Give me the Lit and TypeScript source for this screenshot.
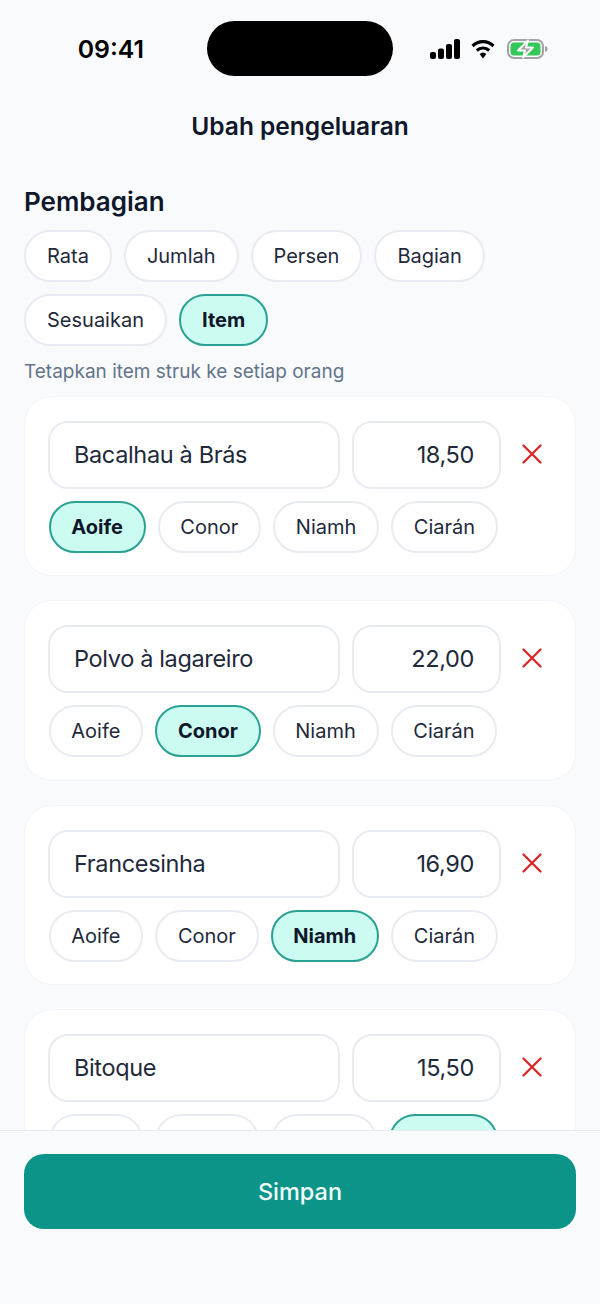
import { LitElement, html, css, svg } from "lit";
import { customElement } from "lit/decorators.js";

const MODES = ["Rata", "Jumlah", "Persen", "Bagian", "Sesuaikan", "Item"];
const PEOPLE = ["Aoife", "Conor", "Niamh", "Ciarán"];
const ITEMS = [
  { name: "Bacalhau à Brás", price: "18,50", who: 0 },
  { name: "Polvo à lagareiro", price: "22,00", who: 1 },
  { name: "Francesinha", price: "16,90", who: 2 },
  { name: "Bitoque", price: "15,50", who: 3 },
];

const closeIcon = svg`<path d="M2.5 2.5 L19.5 19.5 M19.5 2.5 L2.5 19.5" fill="none" stroke="#dc2626" stroke-width="2.3" stroke-linecap="round"/>`;

@customElement("app-root")
export class AppRoot extends LitElement {
  static styles = css`
    :host {
      display: flex;
      flex-direction: column;
      width: 600px;
      height: 1304px;
      overflow: hidden;
      background: #f8fafc;
      font-family: Inter, "Liberation Sans", sans-serif;
      color: #0f172a;
    }
    .status {
      flex: none;
      display: grid;
      grid-template-columns: 207px 186px 207px;
      height: 76px;
      padding-top: 21px;
      box-sizing: border-box;
    }
    .time {
      font-size: 24.8px;
      font-weight: 600;
      color: #000;
      text-align: right;
      padding-right: 63px;
      padding-top: 1px;
      line-height: 55px;
    }
    .island {
      height: 55px;
      border-radius: 28px;
      background: #000;
    }
    .sys {
      display: flex;
      align-items: center;
      gap: 11px;
      height: 55px;
      padding-left: 37px;
    }
    .sys svg { display: block; flex: none; }
    h1 {
      margin: 0;
      flex: none;
      height: 83px;
      padding-top: 33px;
      box-sizing: border-box;
      line-height: 34px;
      font-size: 24.5px;
      font-weight: 600;
      text-align: center;
      color: #0f172a;
    }
    .body {
      flex: 1;
      min-height: 0;
      overflow: hidden;
      padding: 0 24px;
    }
    h2 {
      margin: 27px 0 0;
      font-size: 26px;
      line-height: 32px;
      font-weight: 600;
      color: #0f172a;
    }
    .modes {
      display: flex;
      flex-wrap: wrap;
      gap: 12px;
      margin-top: 12px;
    }
    .chip {
      box-sizing: border-box;
      height: 52px;
      padding: 0 21px;
      display: flex;
      align-items: center;
      border: 2px solid #e8ecf2;
      border-radius: 26px;
      background: #fff;
      font-size: 20px;
      color: #1e293b;
      white-space: nowrap;
    }
    .chip.on {
      border-color: #2ba193;
      background: #ccfbf1;
      font-weight: 700;
      color: #0f172a;
    }
    .hint {
      margin-top: 13px;
      font-size: 19px;
      line-height: 26px;
      color: #64748b;
    }
    .cards {
      display: flex;
      flex-direction: column;
      gap: 24px;
      margin-top: 11px;
    }
    .card {
      box-sizing: border-box;
      height: 180.33px;
      padding: 24px;
      background: #fff;
      border: 1px solid #f1f5f9;
      border-radius: 28px;
      display: flex;
      flex-direction: column;
      gap: 12px;
    }
    .row {
      display: flex;
      align-items: center;
      gap: 12px;
    }
    .field {
      box-sizing: border-box;
      height: 68px;
      padding-bottom: 1px;
      display: flex;
      align-items: center;
      border: 2px solid #e8ecf2;
      border-radius: 20px;
      background: #fff;
      font-size: 23.5px;
      letter-spacing: -0.35px;
      color: #1e293b;
    }
    .name { flex: none; width: 292px; padding-left: 24px; margin-left: -1px; }
    .price { flex: none; width: 149px; justify-content: flex-end; padding-right: 25px; }
    .del { flex: none; width: 22px; height: 22px; margin: 0 0 2px 8px; display: block; }
    .people {
      display: flex;
      gap: 12px;
      margin-left: -0.5px;
    }
    .people .chip { padding: 0 20.75px; }
    .footer {
      flex: none;
      box-sizing: border-box;
      height: 174px;
      padding: 23px 24px 0;
      background: #f8fafc;
      border-top: 1px solid #e8ecf2;
    }
    .save {
      height: 75px;
      border-radius: 20px;
      background: #0d9488;
      color: #f0fdfa;
      font-size: 23.5px;
      font-weight: 500;
      display: flex;
      align-items: center;
      justify-content: center;
    }
  `;

  render() {
    return html`
      <div class="status">
        <div class="time">09:41</div>
        <div class="island"></div>
        <div class="sys">
          <svg width="30" height="20" viewBox="0 0 30 20">
            <rect x="0" y="13" width="6" height="7" rx="2" fill="#000" />
            <rect x="8" y="9.5" width="6" height="10.5" rx="2" fill="#000" />
            <rect x="16" y="5" width="6" height="15" rx="2" fill="#000" />
            <rect x="24" y="0" width="6" height="20" rx="2" fill="#000" />
          </svg>
          <svg width="24" height="20" viewBox="0 0 24 20">
            <path d="M1.5 7 A15 15 0 0 1 22.5 7" fill="none" stroke="#000" stroke-width="3.2" />
            <path d="M5.8 11.5 A9 9 0 0 1 18.2 11.5" fill="none" stroke="#000" stroke-width="3.2" />
            <path d="M8.6 15 A5 5 0 0 1 15.4 15 L12 19.4 Z" fill="#000" />
          </svg>
          <svg width="41" height="20" viewBox="0 0 41 20" style="margin-left:1px">
            <rect x="1" y="1" width="35" height="18" rx="6" fill="none" stroke="#a3a3a3" stroke-width="2" />
            <path d="M38 7 C40 7.5 40.6 8.6 40.6 10 C40.6 11.4 40 12.5 38 13 Z" fill="#a3a3a3" />
            <rect x="3.5" y="3.5" width="30" height="13" rx="3.5" fill="#34c759" />
            <path d="M21 1.5 L11 11.5 H18 L16 18.5 L26 8.5 H19 Z" fill="#a3a3a3" stroke="#f8fafc" stroke-width="2" stroke-linejoin="round" />
          </svg>
        </div>
      </div>
      <h1>Ubah pengeluaran</h1>
      <div class="body">
        <h2>Pembagian</h2>
        <div class="modes">
          ${MODES.map((m) => html`<div class="chip ${m === "Item" ? "on" : ""}">${m}</div>`)}
        </div>
        <div class="hint">Tetapkan item struk ke setiap orang</div>
        <div class="cards">
          ${ITEMS.map(
            (it) => html`
              <div class="card">
                <div class="row">
                  <div class="field name">${it.name}</div>
                  <div class="field price">${it.price}</div>
                  <svg class="del" viewBox="0 0 22 22">${closeIcon}</svg>
                </div>
                <div class="people">
                  ${PEOPLE.map((p, i) => html`<div class="chip ${i === it.who ? "on" : ""}">${p}</div>`)}
                </div>
              </div>
            `
          )}
        </div>
      </div>
      <div class="footer"><div class="save">Simpan</div></div>
    `;
  }
}
